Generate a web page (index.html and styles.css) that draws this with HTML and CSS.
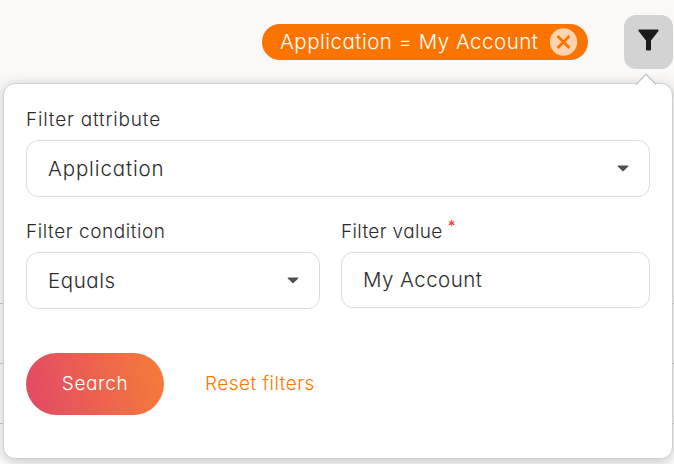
FILE: index.html
```html
<!DOCTYPE html>
<html lang="en">
<head>
<meta charset="utf-8">
<title>Filters</title>
<link rel="stylesheet" href="styles.css">
</head>
<body>
<header class="toolbar">
  <div class="chip"><span class="chip-text">Application = My Account</span>
    <svg class="chip-close" viewBox="0 0 28 28"><circle cx="13.5" cy="14" r="13.7" fill="#ffd3ad"/><path d="M7.5 8L19.5 20M19.5 8L7.5 20" stroke="#fc7400" stroke-width="2.7"/></svg>
  </div>
  <button class="filter-button" aria-label="Filter"><svg width="21" height="22" viewBox="0 0 21 22"><path d="M1 .5H20Q20.8.5 20.5 2L13 11.5V20.5Q13 21.5 12 21.5H9Q8 21.5 8 20.5V11.5L.5 2Q.2.5 1 .5Z" fill="#1b1b1b"/></svg></button>
</header>
<main class="table-area">
  <div class="row first"></div><div class="row"></div><div class="row"></div>
</main>
<form class="popover">
  <svg class="arrow" width="22" height="13" viewBox="0 0 22 13"><path d="M1 11.5L11 1.2L21 11.5V13H1Z" fill="#fff"/><path d="M1 11.5L11 1.2L21 11.5" fill="none" stroke="#c4c4c4" stroke-width="1.3"/></svg>
  <div class="label l-attribute">Filter attribute</div>
  <div class="field"><span class="v-application">Application</span><svg class="caret" width="12" height="7" viewBox="0 0 12 7"><path d="M1 .5H11Q12 .8 11 1.7L6 6.5L1 1.7Q0 .8 1 .5Z" fill="#505050"/></svg></div>
  <div class="columns">
    <div>
      <div class="label l-condition">Filter condition</div>
      <div class="field"><span class="v-equals">Equals</span><svg class="caret" width="12" height="7" viewBox="0 0 12 7"><path d="M1 .5H11Q12 .8 11 1.7L6 6.5L1 1.7Q0 .8 1 .5Z" fill="#505050"/></svg></div>
    </div>
    <div>
      <div class="label"><span class="l-value">Filter value</span><span class="required">*</span></div>
      <div class="field input"><span class="v-account">My Account</span></div>
    </div>
  </div>
  <div class="actions"><button type="button" class="search"><span>Search</span></button><a class="reset">Reset filters</a></div>
</form>
</body>
</html>
```
FILE: styles.css
```css
* { box-sizing: border-box; }
body { margin: 0; width: 674px; height: 464px; overflow: hidden; position: relative; background: #faf9f7; color: #2b2b2b; font: 330 20.5px/24px Inter, "Liberation Sans", sans-serif; font-feature-settings: "cv11" 1; white-space: nowrap; }
button { border: 0; padding: 0; font: inherit; font-feature-settings: inherit; }
.toolbar { height: 98px; padding: 15px 1px 0 0; display: flex; justify-content: flex-end; align-items: flex-start; gap: 36px; }
.chip { width: 326px; height: 36px; margin-top: 9px; padding: 0 10px 0 18px; border-radius: 18px; background: #fc7400; color: #fff; display: flex; align-items: center; justify-content: space-between; }
.chip-text { letter-spacing: .49px; }
.chip-close { width: 28px; height: 28px; display: block; flex: none; }
.filter-button { width: 49px; height: 54px; border-radius: 12px; background: #d3d3d3; display: flex; justify-content: center; padding-top: 14px; }
.table-area { height: 366px; background: #fff; }
.row { height: 60px; border-bottom: 1px solid #cfcfcf; }
.row.first { height: 206px; }
.popover { position: absolute; left: 3px; top: 83px; width: 670px; height: 376px; padding: 24px 22px 0; background: #fff; border: 1px solid #d0d0d0; border-radius: 12px; box-shadow: 0 3px 14px rgba(0,0,0,.24); }
.arrow { position: absolute; left: 631px; top: -11px; }
.label { height: 24px; margin-bottom: 8px; font-size: 19px; }
.l-attribute { letter-spacing: .81px; }
.l-condition { letter-spacing: .56px; }
.l-value { letter-spacing: .36px; }
.v-application { letter-spacing: .87px; }
.v-equals { letter-spacing: .55px; }
.v-account { letter-spacing: .46px; }
.field { height: 57px; border: 1px solid #dcdcdc; border-radius: 12px; padding: 0 20px 0 21px; display: flex; align-items: center; justify-content: space-between; }
.field.input { height: 56px; }
.caret { display: block; margin-top: -1px; }
.columns { display: grid; grid-template-columns: 294px 309px; gap: 21px; margin-top: 23px; }
.required { color: #f04438; font-size: 15px; margin-left: 5px; position: relative; top: -7px; font-weight: 500; }
.actions { display: flex; align-items: center; margin-top: 44px; }
.search { width: 138px; height: 62px; border-radius: 31px; color: #fff; background: linear-gradient(75deg, #e34d62 10%, #f57a3b 95%); font-size: 19px; letter-spacing: .6px; font-weight: 300; }
.reset { margin-left: 41px; color: #fc7800; font-size: 19px; letter-spacing: .48px; }
```
